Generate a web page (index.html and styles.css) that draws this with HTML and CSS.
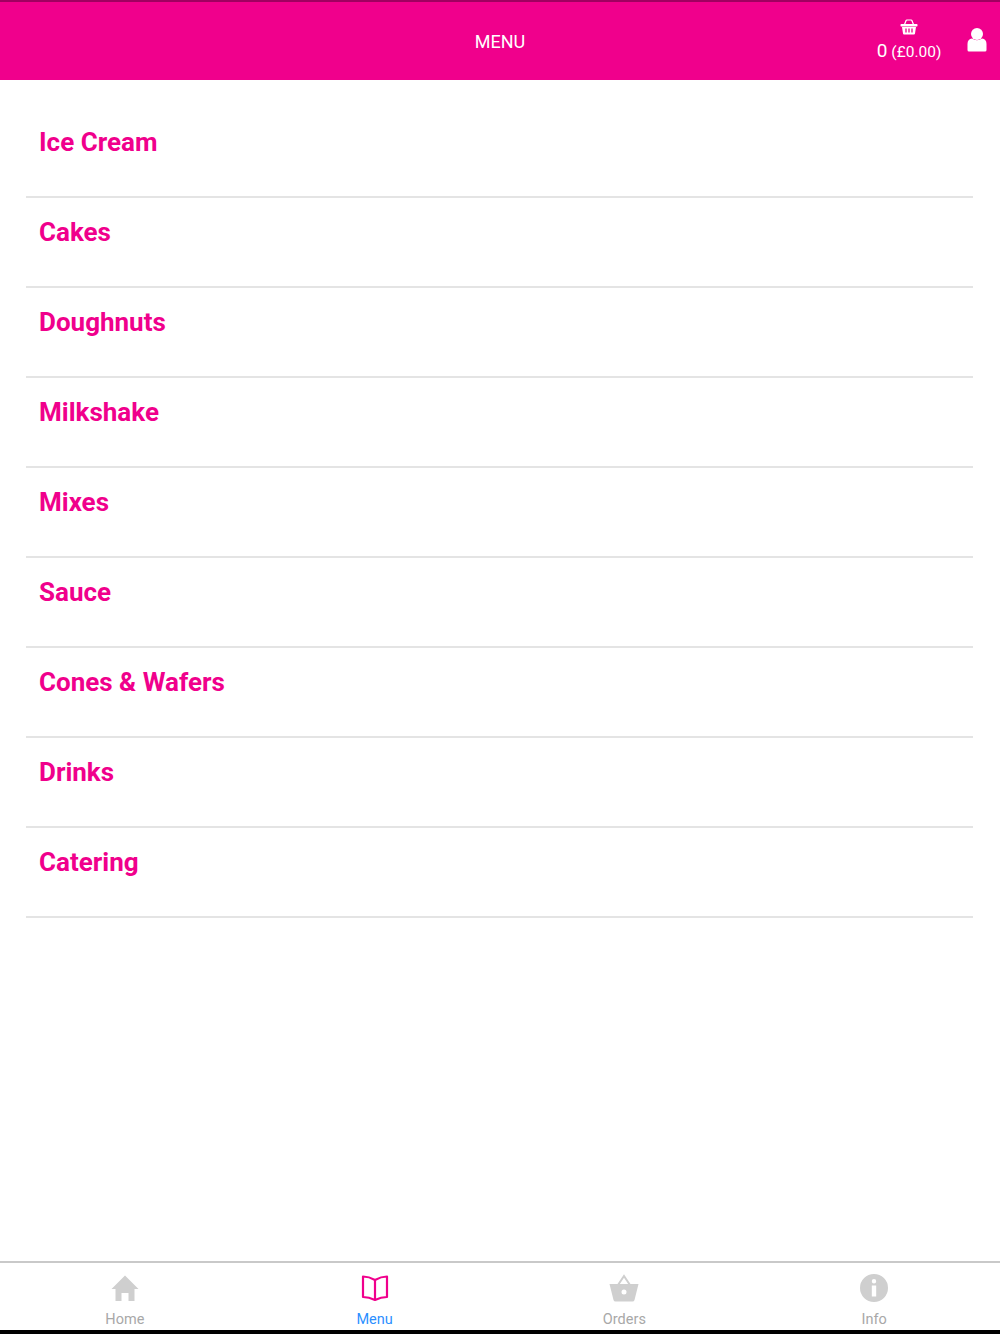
FILE: index.html
```html
<!DOCTYPE html>
<html lang="en">
<head>
<meta charset="utf-8">
<title>Menu</title>
<link rel="stylesheet" href="styles.css">
</head>
<body>
<div class="app">
  <header class="topbar">
    <div class="title">MENU</div>
    <div class="cart">
      <svg class="cart-icon" viewBox="0 0 18 16" width="18" height="16"><path d="M4.5 5.5 L6 1.8 Q6.2 1 7 1 H11 Q11.800 1 12 1.800 L13.500 5.500" fill="none" stroke="#fff" stroke-width="1.200"/><rect x="0.500" y="5" width="17" height="2.500" rx="0.800" fill="#fff"/><path d="M2 8 H16 L15 14.500 Q14.900 15.500 14 15.500 H4 Q3.100 15.500 3 14.500 Z" fill="#fff"/><path d="M6 9.500 V13.500 M9 9.500 V13.500 M12 9.500 V13.500" stroke="#f0008c" stroke-width="1.300"/></svg>
      <div class="cart-text"><span class="count">0</span> <span class="price">(£0.00)</span></div>
    </div>
    <svg class="user" viewBox="0 0 20 26" width="20" height="26"><circle cx="10" cy="7" r="6" fill="#fff"/><path d="M0.500 23 V17 Q0.500 12 5 11.500 Q10 15 15 11.500 Q19.500 12 19.500 17 V23 Q19.500 24.500 18 24.500 H2 Q0.500 24.500 0.500 23 Z" fill="#fff"/></svg>
  </header>
  <main class="list">
    <a class="item">Ice Cream</a>
    <a class="item">Cakes</a>
    <a class="item">Doughnuts</a>
    <a class="item">Milkshake</a>
    <a class="item">Mixes</a>
    <a class="item">Sauce</a>
    <a class="item">Cones &amp; Wafers</a>
    <a class="item">Drinks</a>
    <a class="item">Catering</a>
  </main>
  <nav class="tabs">
    <div class="tab">
      <svg class="tab-icon" viewBox="0 0 28 28" width="28" height="28"><path d="M14 1.500 L27.500 15 H23.500 V27 H17.500 V19 H10.500 V27 H4.500 V15 H0.500 Z" fill="#cfcfcf"/></svg>
      <span class="tab-label">Home</span>
    </div>
    <div class="tab active">
      <svg class="tab-icon" viewBox="0 0 28 28" width="28" height="28"><path d="M14 6 Q8 2.500 2 2.500 V23 Q8 23 14 26 Q20 23 26 23 V2.500 Q20 2.500 14 6 Z M14 6 V26" fill="none" stroke="#f0008c" stroke-width="2.200" stroke-linejoin="round"/></svg>
      <span class="tab-label">Menu</span>
    </div>
    <div class="tab">
      <svg class="tab-icon" viewBox="0 0 30 28" width="30" height="28"><path d="M9 11 L15 2 L21 11" fill="none" stroke="#cfcfcf" stroke-width="2"/><path fill-rule="evenodd" d="M0.500 10 H29.500 L25.500 26 Q25 27.500 23.500 27.500 H6.500 Q5 27.500 4.500 26 Z M15 15.500 A2.500 2.500 0 1 0 15 20.500 A2.500 2.500 0 1 0 15 15.500 Z" fill="#cfcfcf"/></svg>
      <span class="tab-label">Orders</span>
    </div>
    <div class="tab">
      <svg class="tab-icon" viewBox="0 0 28 28" width="28" height="28"><path fill-rule="evenodd" d="M14 0 A14 14 0 1 0 14 28 A14 14 0 1 0 14 0 Z M14 5 A2.200 2.200 0 1 1 14 9.400 A2.200 2.200 0 1 1 14 5 Z M11.800 11.500 H16.200 V22.500 H11.800 Z" fill="#cfcfcf"/></svg>
      <span class="tab-label">Info</span>
    </div>
  </nav>
</div>
</body>
</html>
```
FILE: styles.css
```css
* { box-sizing: border-box; }
html, body { margin: 0; padding: 0; }
body { background: #fff; font-family: Roboto, "Liberation Sans", sans-serif; }
.app { width: 1000px; height: 1334px; display: flex; flex-direction: column; overflow: hidden; }
.topbar {
  height: 80px; flex: none; background: #f0008c; border-top: 2px solid #a00060;
  display: flex; align-items: center; justify-content: flex-end; position: relative; color: #fff;
}
.title { position: absolute; left: 0; right: 0; top: 29px; text-align: center; font-size: 18px; line-height: 22px; }
.cart { display: flex; flex-direction: column; align-items: center; margin-right: 26px; margin-top: -2px; padding-top: 2px; width: 64px; }
.cart-icon { display: block; margin-bottom: 5px; }
.cart-text { white-space: nowrap; line-height: 22px; }
.count { font-size: 19px; }
.price { font-size: 15.500px; }
.user { margin-right: 13px; margin-top: -2px; }
.list { flex: 1; padding: 28px 26px 0 26px; }
.item {
  display: block; height: 90px; padding: 17px 0 0 13px; margin-right: 1px;
  border-bottom: 2px solid #e4e4e4;
  color: #f0008c; font-size: 26px; font-weight: 700; line-height: 34px;
}
.tabs {
  flex: none; display: grid; grid-template-columns: repeat(4, 1fr);
  border-top: 2px solid #c9c9c9; border-bottom: 4px solid #000; background: #fff;
  padding-right: 1px; height: 73px;
}
.tab { display: flex; flex-direction: column; align-items: center; padding-top: 11px; }
.tab-icon { display: block; height: 28px; }
.tab-label { font-size: 14.500px; line-height: 18px; margin-top: 9px; color: #a8a8a8; }
.active .tab-label { color: #2b8fff; }
```
